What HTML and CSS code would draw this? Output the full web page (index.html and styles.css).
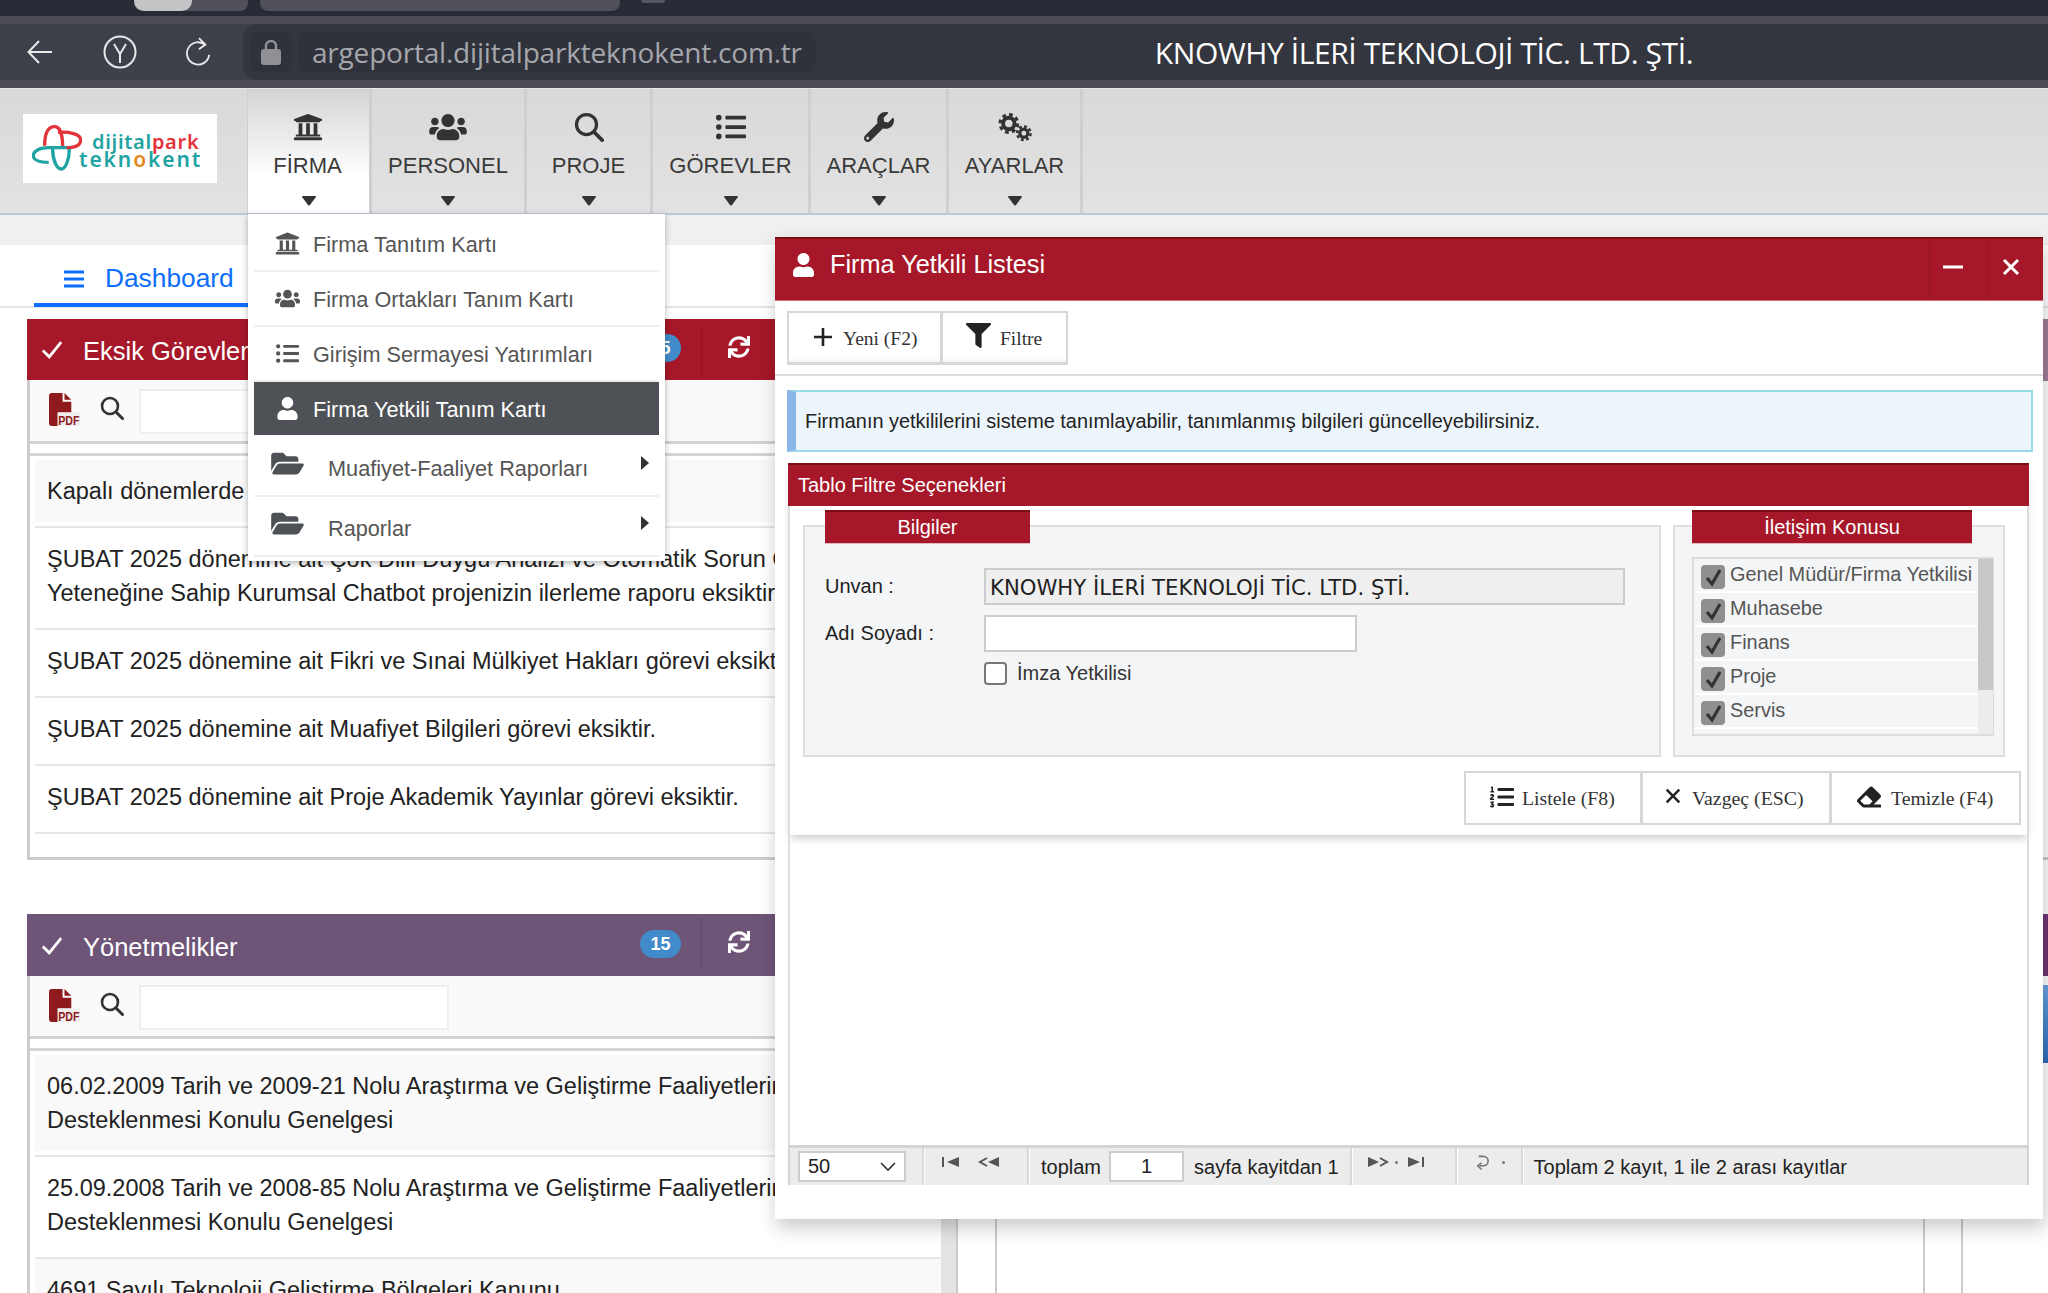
FILE: index.html
```html
<!DOCTYPE html>
<html lang="tr">
<head>
<meta charset="utf-8">
<title>Firma Yetkili Listesi</title>
<link rel="stylesheet" href="styles.css">
</head>
<body>
<svg class="sprite" xmlns="http://www.w3.org/2000/svg">
  <symbol id="i-bank" viewBox="0 0 512 512"><path d="M496 128v16a8 8 0 0 1-8 8h-24v12c0 6.627-5.373 12-12 12H60c-6.627 0-12-5.373-12-12v-12H24a8 8 0 0 1-8-8v-16a8 8 0 0 1 4.941-7.392l232-88a7.996 7.996 0 0 1 6.118 0l232 88A8 8 0 0 1 496 128zm-24 304H40c-13.255 0-24 10.745-24 24v16a8 8 0 0 0 8 8h464a8 8 0 0 0 8-8v-16c0-13.255-10.745-24-24-24zM96 192v192H60c-6.627 0-12 5.373-12 12v20h416v-20c0-6.627-5.373-12-12-12h-36V192h-64v192h-64V192h-64v192h-64V192H96z"/></symbol>
  <symbol id="i-users" viewBox="0 0 640 512"><path d="M96 224c35.3 0 64-28.7 64-64s-28.7-64-64-64-64 28.7-64 64 28.7 64 64 64zm448 0c35.3 0 64-28.7 64-64s-28.7-64-64-64-64 28.7-64 64 28.7 64 64 64zm32 32h-64c-17.6 0-33.5 7.1-45.1 18.6 40.3 22.1 68.9 62 75.1 109.4h66c17.7 0 32-14.3 32-32v-32c0-35.3-28.7-64-64-64zm-256 0c61.9 0 112-50.1 112-112S381.9 32 320 32 208 82.1 208 144s50.1 112 112 112zm76.8 32h-8.3c-20.8 10-43.9 16-68.5 16s-47.6-6-68.5-16h-8.3C179.6 288 128 339.6 128 403.2V432c0 26.5 21.5 48 48 48h288c26.5 0 48-21.5 48-48v-28.8c0-63.6-51.6-115.2-115.2-115.2zm-223.7-13.4C161.5 263.1 145.6 256 128 256H64c-35.3 0-64 28.7-64 64v32c0 17.7 14.3 32 32 32h65.9c6.3-47.4 34.9-87.3 75.2-109.4z"/></symbol>
  <symbol id="i-search" viewBox="0 0 24 24"><circle cx="10" cy="10" r="8" fill="none" stroke="currentColor" stroke-width="2.6"/><path d="M16 16l6.5 6.5" fill="none" stroke="currentColor" stroke-width="3" stroke-linecap="round"/></symbol>
  <symbol id="i-list" viewBox="0 0 512 512"><path d="M48 48a48 48 0 1 0 48 48 48 48 0 0 0-48-48zm0 160a48 48 0 1 0 48 48 48 48 0 0 0-48-48zm0 160a48 48 0 1 0 48 48 48 48 0 0 0-48-48zm448 16H176a16 16 0 0 0-16 16v32a16 16 0 0 0 16 16h320a16 16 0 0 0 16-16v-32a16 16 0 0 0-16-16zm0-320H176a16 16 0 0 0-16 16v32a16 16 0 0 0 16 16h320a16 16 0 0 0 16-16V80a16 16 0 0 0-16-16zm0 160H176a16 16 0 0 0-16 16v32a16 16 0 0 0 16 16h320a16 16 0 0 0 16-16v-32a16 16 0 0 0-16-16z"/></symbol>
  <symbol id="i-wrench" viewBox="0 0 512 512"><path d="M507.73 109.1c-2.24-9.03-13.54-12.09-20.12-5.51l-74.36 74.36-67.88-11.31-11.31-67.88 74.36-74.36c6.62-6.62 3.43-17.9-5.66-20.16-47.38-11.74-99.55.91-136.58 37.93-39.64 39.64-50.55 97.1-34.05 147.2L18.74 402.76c-24.99 24.99-24.99 65.51 0 90.5 24.99 24.99 65.51 24.99 90.5 0l213.21-213.21c50.12 16.71 107.47 5.68 147.37-34.22 37.07-37.07 49.7-89.32 37.91-136.73zM64 472c-13.25 0-24-10.75-24-24 0-13.26 10.75-24 24-24s24 10.74 24 24c0 13.25-10.75 24-24 24z"/></symbol>
  <symbol id="i-cogs" viewBox="0 0 40 34"><g fill="none" stroke="currentColor"><circle cx="13" cy="13" r="6.500" stroke-width="4.500"/><circle cx="13" cy="13" r="10" stroke-width="3.600" stroke-dasharray="4.200 3.650"/><circle cx="30" cy="24" r="4.600" stroke-width="3.600"/><circle cx="30" cy="24" r="7.600" stroke-width="3" stroke-dasharray="3.300 2.670"/></g></symbol>
  <symbol id="i-user" viewBox="0 0 448 512"><path d="M224 256c70.7 0 128-57.3 128-128S294.7 0 224 0 96 57.3 96 128s57.3 128 128 128zm89.6 32h-16.7c-22.2 10.2-46.9 16-72.9 16s-50.6-5.8-72.9-16h-16.7C60.2 288 0 348.2 0 422.4V464c0 26.5 21.5 48 48 48h352c26.5 0 48-21.5 48-48v-41.6c0-74.2-60.2-134.4-134.4-134.4z"/></symbol>
  <symbol id="i-folder" viewBox="0 0 576 512"><path d="M572.694 292.093L500.27 416.248A63.997 63.997 0 0 1 444.989 448H45.025c-18.523 0-30.064-20.093-20.731-36.093l72.424-124.155A64 64 0 0 1 152 256h399.964c18.523 0 30.064 20.093 20.73 36.093zM152 224h328v-48c0-26.51-21.49-48-48-48H272l-64-64H48C21.49 64 0 85.49 0 112v278.046l69.077-118.418C86.214 242.25 117.989 224 152 224z"/></symbol>
  <symbol id="i-sync" viewBox="0 0 512 512"><path d="M440.65 12.57l4 82.77A247.16 247.16 0 0 0 255.83 8C134.73 8 33.91 94.92 12.29 209.82A12 12 0 0 0 24.09 224h49.05a12 12 0 0 0 11.67-9.26 175.91 175.91 0 0 1 317-56.94l-101.46-4.86a12 12 0 0 0-12.57 12v47.41a12 12 0 0 0 12 12H500a12 12 0 0 0 12-12V12a12 12 0 0 0-12-12h-47.37a12 12 0 0 0-11.98 12.57zM255.83 432a175.61 175.61 0 0 1-146-77.8l101.8 4.87a12 12 0 0 0 12.57-12v-47.4a12 12 0 0 0-12-12H12a12 12 0 0 0-12 12V500a12 12 0 0 0 12 12h47.35a12 12 0 0 0 12-12.6l-4.15-82.57A247.17 247.17 0 0 0 255.83 504c121.11 0 221.93-86.92 243.55-201.82a12 12 0 0 0-11.8-14.18h-49.05a12 12 0 0 0-11.67 9.26A175.86 175.86 0 0 1 255.83 432z"/></symbol>
  <symbol id="i-filter" viewBox="0 0 512 512"><path d="M487.976 0H24.028C2.71 0-8.047 25.866 7.058 40.971L192 225.941V432c0 7.831 3.821 15.17 10.237 19.662l80 55.98C298.02 518.69 320 507.493 320 487.98V225.941l184.947-184.97C520.021 25.896 509.338 0 487.976 0z"/></symbol>
  <symbol id="i-eraser" viewBox="0 0 512 512"><path d="M497.941 273.941c18.745-18.745 18.745-49.137 0-67.882l-160-160c-18.745-18.745-49.136-18.746-67.883 0l-256 256c-18.745 18.745-18.745 49.137 0 67.882l96 96A48.004 48.004 0 0 0 144 480h356c6.627 0 12-5.373 12-12v-40c0-6.627-5.373-12-12-12H355.883l142.058-142.059zm-302.627-62.627l137.373 137.373L265.373 416H150.628l-80-80 124.686-124.686z"/></symbol>
  <symbol id="i-listol" viewBox="0 0 512 512"><path d="M61.77 401l17.5-20.15a19.92 19.92 0 0 0 5.07-14.19v-3.31C84.34 356 80.5 352 73 352H16a8 8 0 0 0-8 8v16a8 8 0 0 0 8 8h22.83a157.41 157.41 0 0 0-11 12.31l-5.61 7c-4 5.07-5.25 10.13-2.8 14.88l1.05 1.93c3 5.76 6.29 7.88 12.25 7.88h4.73c10.33 0 15.94 2.44 15.94 9.09 0 4.72-4.2 8.22-14.36 8.22a41.54 41.54 0 0 1-15.47-3.12c-6.49-3.88-11.74-3.5-15.6 3.12l-5.59 9.31c-3.72 6.13-3.19 11.72 2.63 15.94 7.71 4.69 20.38 9.44 37 9.44 34.16 0 48.5-22.75 48.5-44.12-.03-14.38-9.12-29.76-28.73-34.88zM496 224H176a16 16 0 0 0-16 16v32a16 16 0 0 0 16 16h320a16 16 0 0 0 16-16v-32a16 16 0 0 0-16-16zm0-160H176a16 16 0 0 0-16 16v32a16 16 0 0 0 16 16h320a16 16 0 0 0 16-16V80a16 16 0 0 0-16-16zm0 320H176a16 16 0 0 0-16 16v32a16 16 0 0 0 16 16h320a16 16 0 0 0 16-16v-32a16 16 0 0 0-16-16zM16 160h64a8 8 0 0 0 8-8v-16a8 8 0 0 0-8-8H64V40a8 8 0 0 0-8-8H32a8 8 0 0 0-7.14 4.42l-8 16A8 8 0 0 0 24 64h8v64H16a8 8 0 0 0-8 8v16a8 8 0 0 0 8 8zm-3.91 160H80a8 8 0 0 0 8-8v-16a8 8 0 0 0-8-8H41.32c3.29-10.29 48.34-18.68 48.34-56.44 0-29.06-25-39.56-44.47-39.56-21.36 0-33.8 10-40.46 18.75-4.37 5.59-3 10.84 2.8 15.37l8.58 6.88c5.61 4.56 11 2.47 16.12-2.44a13.44 13.44 0 0 1 9.46-3.84c3.33 0 9.28 1.56 9.28 8.75C51 248.19 0 257.31 0 304.59v4C0 316 5.08 320 12.09 320z"/></symbol>
  <symbol id="i-caret" viewBox="0 0 14 10"><path d="M1 0h12q1.500 0 .7 1.200L8 9q-1 1-2 0L.3 1.200Q-.5 0 1 0z"/></symbol>
  <symbol id="i-check" viewBox="0 0 24 20"><path d="M2 11l7 7L22 2" fill="none" stroke="currentColor" stroke-width="3"/></symbol>
  <symbol id="i-pdf" viewBox="0 0 32 34"><path d="M3 0h11v9h9v11H9v14H3a3 3 0 0 1-3-3V3a3 3 0 0 1 3-3z" fill="#8e1a1e"/><path d="M16 0l7 7h-7z" fill="#8e1a1e"/><rect x="9" y="20" width="23" height="14" fill="#f0eeec"/><text x="9.500" y="33" font-family="Liberation Sans" font-size="14" font-weight="700" fill="#8e1a1e" textLength="22" lengthAdjust="spacingAndGlyphs">PDF</text></symbol>
</svg>

<div class="page">
  <div class="tabstrip">
    <span class="tab tab-a"><span class="tab-thumb"></span></span>
    <span class="tab tab-b"></span>
    <span class="tab-dot"></span>
  </div>
  <div class="browserbar">
    <div class="browserbar-in">
      <svg class="bb-icon bb-back" viewBox="0 0 28 28"><path d="M26 14H3M13 3L2.500 14 13 25" fill="none" stroke="currentColor" stroke-width="2"/></svg>
      <svg class="bb-icon bb-y" viewBox="0 0 34 34"><ellipse cx="17" cy="17" rx="15.500" ry="15.500" fill="none" stroke="currentColor" stroke-width="2"/><path d="M11 9l6 10 6-10M17 19v9" fill="none" stroke="currentColor" stroke-width="2"/></svg>
      <svg class="bb-icon bb-reload" viewBox="0 0 28 32"><path d="M22 8.500A12 12 0 1 0 26 19M15 1l7 7-7 5" fill="none" stroke="currentColor" stroke-width="2"/></svg>
      <div class="urlzone">
        <span class="lock-pill"><svg class="bb-lock" viewBox="0 0 20 26"><path d="M5 11V7a5 5 0 0 1 10 0v4" fill="none" stroke="#8e9096" stroke-width="2.500"/><rect x="0" y="10" width="20" height="16" rx="3" fill="#8e9096"/></svg></span>
        <span class="url">argeportal.dijitalparkteknokent.com.tr</span>
        <span class="bar-title">KNOWHY İLERİ TEKNOLOJİ TİC. LTD. ŞTİ.</span>
      </div>
    </div>
  </div>

  <nav class="nav">
    <div class="logo-wrap">
      <div class="logo">
        <svg class="logo-mark" viewBox="0 0 150 138"><g fill="none" stroke-width="10"><path d="M38 62C38 18 52 5 68 5C84 5 92 30 92 66" stroke="#e2343a"/><path d="M78 22C112 20 146 26 146 45C146 60 130 68 100 68" stroke="#e2343a"/><path d="M104 68H52C22 68 4 78 4 92C4 108 26 112 50 112" stroke="#1fa3a3"/><path d="M62 72C62 105 74 132 88 132C100 132 112 105 112 72" stroke="#1fa3a3"/></g></svg>
        <div class="logo-text">
          <span class="logo-l1"><span class="c-teal">dijital</span><span class="c-red">park</span></span>
          <span class="logo-l2">tekn<span class="c-orange">o</span>kent</span>
        </div>
      </div>
    </div>
    <div class="nav-item nav-firma active"><svg class="ni"><use href="#i-bank"/></svg><span>FİRMA</span><svg class="caret"><use href="#i-caret"/></svg></div>
    <div class="nav-item nav-personel"><svg class="ni ni-w"><use href="#i-users"/></svg><span>PERSONEL</span><svg class="caret"><use href="#i-caret"/></svg></div>
    <div class="nav-item nav-proje"><svg class="ni"><use href="#i-search"/></svg><span>PROJE</span><svg class="caret"><use href="#i-caret"/></svg></div>
    <div class="nav-item nav-gorev"><svg class="ni"><use href="#i-list"/></svg><span>GÖREVLER</span><svg class="caret"><use href="#i-caret"/></svg></div>
    <div class="nav-item nav-arac"><svg class="ni"><use href="#i-wrench"/></svg><span>ARAÇLAR</span><svg class="caret"><use href="#i-caret"/></svg></div>
    <div class="nav-item nav-ayar"><svg class="ni ni-c"><use href="#i-cogs"/></svg><span>AYARLAR</span><svg class="caret"><use href="#i-caret"/></svg></div>
  </nav>
  <div class="subnoise"></div>

  <div class="content">
    <div class="dash-tabs">
      <div class="dash-tab">
        <svg class="dash-ham" viewBox="0 0 20 18"><path d="M0 2h20M0 9h20M0 16h20" stroke="currentColor" stroke-width="3"/></svg>
        <span>Dashboard</span>
      </div>
    </div>
    <div class="columns">
      <div class="col col-left">
        <section class="panel panel-red">
          <header class="panel-head">
            <svg class="ph-check"><use href="#i-check"/></svg>
            <span class="ph-title">Eksik Görevler</span>
            <span class="badge">15</span>
            <span class="ph-btn"><svg class="ph-sync"><use href="#i-sync"/></svg></span>
          </header>
          <div class="panel-tools">
            <svg class="pdf"><use href="#i-pdf"/></svg>
            <svg class="tool-search"><use href="#i-search"/></svg>
            <span class="tool-input"></span>
          </div>
          <div class="rows">
            <div class="row row-alt">Kapalı dönemlerde</div>
            <div class="row">ŞUBAT 2025 dönemine ait Çok Dilli Duygu Analizi ve Otomatik Sorun Çözme Yeteneğine Sahip Kurumsal Chatbot projenizin ilerleme raporu eksiktir.</div>
            <div class="row">ŞUBAT 2025 dönemine ait Fikri ve Sınai Mülkiyet Hakları görevi eksiktir.</div>
            <div class="row">ŞUBAT 2025 dönemine ait Muafiyet Bilgileri görevi eksiktir.</div>
            <div class="row">ŞUBAT 2025 dönemine ait Proje Akademik Yayınlar görevi eksiktir.</div>
          </div>
        </section>
        <section class="panel panel-purple">
          <header class="panel-head">
            <svg class="ph-check"><use href="#i-check"/></svg>
            <span class="ph-title">Yönetmelikler</span>
            <span class="badge">15</span>
            <span class="ph-btn"><svg class="ph-sync"><use href="#i-sync"/></svg></span>
          </header>
          <div class="panel-tools">
            <svg class="pdf"><use href="#i-pdf"/></svg>
            <svg class="tool-search"><use href="#i-search"/></svg>
            <span class="tool-input"></span>
          </div>
          <div class="rows">
            <div class="row row-alt">06.02.2009 Tarih ve 2009-21 Nolu Araştırma ve Geliştirme Faaliyetlerinin Desteklenmesi Konulu Genelgesi</div>
            <div class="row">25.09.2008 Tarih ve 2008-85 Nolu Araştırma ve Geliştirme Faaliyetlerinin Desteklenmesi Konulu Genelgesi</div>
            <div class="row row-alt">4691 Sayılı Teknoloji Geliştirme Bölgeleri Kanunu</div>
          </div>
        </section>
      </div>
      <div class="gutter"></div>
      <div class="col col-mid"></div>
      <div class="col col-right">
        <div class="sliver sliver-a"></div>
        <div class="sliver sliver-line"></div>
        <div class="sliver sliver-b"></div>
        <div class="sliver sliver-c"></div>
      </div>
    </div>
  </div>

  <div class="menu">
    <a class="mi"><svg class="mi-ic"><use href="#i-bank"/></svg>Firma Tanıtım Kartı</a>
    <a class="mi"><svg class="mi-ic"><use href="#i-users"/></svg>Firma Ortakları Tanım Kartı</a>
    <a class="mi"><svg class="mi-ic mi-ic-s"><use href="#i-list"/></svg>Girişim Sermayesi Yatırımları</a>
    <a class="mi mi-active"><svg class="mi-ic mi-ic-s"><use href="#i-user"/></svg>Firma Yetkili Tanım Kartı</a>
    <a class="mi mi-sub"><svg class="mi-fold"><use href="#i-folder"/></svg>Muafiyet-Faaliyet Raporları<i class="mi-arrow"></i></a>
    <a class="mi mi-sub"><svg class="mi-fold"><use href="#i-folder"/></svg>Raporlar<i class="mi-arrow"></i></a>
  </div>

  <div class="dialog">
    <header class="dlg-head">
      <svg class="dlg-user"><use href="#i-user"/></svg>
      <span class="dlg-title">Firma Yetkili Listesi</span>
      <span class="dlg-btn"><svg viewBox="0 0 20 20" class="dlg-btn-ic"><path d="M0 10h20" stroke="#fff" stroke-width="3"/></svg></span>
      <span class="dlg-btn dlg-btn-last"><svg viewBox="0 0 20 20" class="dlg-btn-ic"><path d="M3 3l14 14M17 3L3 17" stroke="#fff" stroke-width="3"/></svg></span>
    </header>
    <div class="dlg-tools">
      <div class="btn-group">
        <button class="sbtn sbtn-yeni"><svg class="sb-ic" viewBox="0 0 20 20"><path d="M10 1v18M1 10h18" stroke="#222" stroke-width="2.600"/></svg>Yeni (F2)</button>
        <button class="sbtn sbtn-filtre"><svg class="sb-ic sb-filter"><use href="#i-filter"/></svg>Filtre</button>
      </div>
    </div>
    <div class="info">Firmanın yetkililerini sisteme tanımlayabilir, tanımlanmış bilgileri güncelleyebilirsiniz.</div>
    <div class="filter">
      <div class="filter-head">Tablo Filtre Seçenekleri</div>
      <div class="filter-body">
        <div class="fs fs-info">
          <div class="legend legend-info">Bilgiler</div>
          <div class="form-row form-row-1"><label class="lab">Unvan :</label><span class="inp inp-ro">KNOWHY İLERİ TEKNOLOJİ TİC. LTD. ŞTİ.</span></div>
          <div class="form-row form-row-2"><label class="lab">Adı Soyadı :</label><span class="inp inp-name"></span></div>
          <div class="form-row form-row-3"><span class="lab"></span><span class="cb"></span><span class="cb-label">İmza Yetkilisi</span></div>
        </div>
        <div class="fs fs-contact">
          <div class="legend legend-contact">İletişim Konusu</div>
          <div class="clist">
            <div class="clist-items">
              <div class="citem"><span class="cc"><svg viewBox="0 0 24 24"><path d="M6 13l5 6 8-14" fill="none" stroke="#333" stroke-width="3.200"/></svg></span>Genel Müdür/Firma Yetkilisi</div>
              <div class="citem"><span class="cc"><svg viewBox="0 0 24 24"><path d="M6 13l5 6 8-14" fill="none" stroke="#333" stroke-width="3.200"/></svg></span>Muhasebe</div>
              <div class="citem"><span class="cc"><svg viewBox="0 0 24 24"><path d="M6 13l5 6 8-14" fill="none" stroke="#333" stroke-width="3.200"/></svg></span>Finans</div>
              <div class="citem"><span class="cc"><svg viewBox="0 0 24 24"><path d="M6 13l5 6 8-14" fill="none" stroke="#333" stroke-width="3.200"/></svg></span>Proje</div>
              <div class="citem"><span class="cc"><svg viewBox="0 0 24 24"><path d="M6 13l5 6 8-14" fill="none" stroke="#333" stroke-width="3.200"/></svg></span>Servis</div>
            </div>
            <div class="cscroll"><span class="cthumb"></span></div>
          </div>
        </div>
      </div>
      <div class="filter-actions">
        <button class="abtn abtn-list"><svg class="ab-ic"><use href="#i-listol"/></svg>Listele (F8)</button>
        <button class="abtn abtn-esc"><svg class="ab-ic ab-x" viewBox="0 0 20 20"><path d="M3 3l14 14M17 3L3 17" stroke="#222" stroke-width="2.800"/></svg>Vazgeç (ESC)</button>
        <button class="abtn abtn-clear"><svg class="ab-ic"><use href="#i-eraser"/></svg>Temizle (F4)</button>
      </div>
    </div>
    <div class="grid-area"></div>
    <div class="pager">
      <span class="pg-select"><span>50</span><svg viewBox="0 0 16 10" class="pg-chev"><path d="M1 1l7 7 7-7" fill="none" stroke="#333" stroke-width="1.600"/></svg></span>
      <span class="pg-sep"></span>
      <span class="pg-nav pg-nav-a">
        <svg class="pg-ic" viewBox="0 0 18 12"><path d="M1 1v10" stroke="#555" stroke-width="2"/><path d="M17 1v10L5 6z" fill="#555"/></svg>
        <svg class="pg-ic pg-ic-w" viewBox="0 0 22 12"><path d="M9 2L2 6l7 4" fill="none" stroke="#555" stroke-width="2"/><path d="M21 1v10L10 6z" fill="#555"/></svg>
      </span>
      <span class="pg-sep pg-sep-0"></span>
      <span class="pg-text pg-toplam">toplam</span>
      <span class="pg-input">1</span>
      <span class="pg-text pg-sayfa">sayfa kayitdan 1</span>
      <span class="pg-sep pg-sep-b"></span>
      <span class="pg-nav pg-nav-b">
        <svg class="pg-ic pg-ic-w" viewBox="0 0 22 12"><path d="M1 1v10l11-5z" fill="#555"/><path d="M13 2l7 4-7 4" fill="none" stroke="#555" stroke-width="2"/></svg>
        <span class="pg-dot"></span>
        <svg class="pg-ic" viewBox="0 0 18 12"><path d="M1 1v10l12-5z" fill="#555"/><path d="M16 1v10" stroke="#555" stroke-width="2"/></svg>
      </span>
      <span class="pg-sep pg-sep-0"></span>
      <span class="pg-nav pg-nav-c">
        <svg class="pg-ic-r" viewBox="0 0 16 18"><path d="M4 3h5a5 5 0 0 1 0 10H5" fill="none" stroke="#777" stroke-width="1.800"/><path d="M7 10l-4 3 4 4" fill="none" stroke="#777" stroke-width="1.800"/></svg>
        <span class="pg-dot"></span>
      </span>
      <span class="pg-sep pg-sep-0"></span>
      <span class="pg-text pg-total">Toplam 2 kayıt, 1 ile 2 arası kayıtlar</span>
    </div>
  </div>
</div>
</body>
</html>
```
FILE: styles.css
```css
* { box-sizing: border-box; }
html, body { margin: 0; padding: 0; }
body { width: 2048px; height: 1293px; overflow: hidden; background: #fff; font-family: "Liberation Sans", Arial, sans-serif; color: #222; }
.sprite { position: absolute; width: 0; height: 0; overflow: hidden; }
.page { position: relative; width: 2048px; height: 1293px; overflow: hidden; }
svg { display: block; fill: currentColor; }

/* browser chrome */
.tabstrip { height: 16px; background: #282a35; display: flex; align-items: flex-start; padding-left: 134px; }
.tab { height: 11px; background: #4f5059; border-radius: 0 0 8px 8px; display: block; }
.tab-a { width: 114px; }
.tab-thumb { display: block; width: 58px; height: 11px; background: #c4c4c6; border-radius: 0 0 10px 10px; }
.tab-b { width: 360px; margin-left: 12px; }
.tab-dot { width: 24px; height: 3px; background: #55565f; border-radius: 0 0 12px 12px; margin-left: 21px; }
.browserbar { height: 73px; background: #4a4b55; padding: 8px 0; border-bottom: 1px solid #e8e8e8; }
.browserbar-in { height: 56px; background: #3d3f49; display: flex; align-items: center; color: #e9e9ea; }
.bb-icon { flex: none; }
.bb-back { width: 28px; height: 28px; margin-left: 26px; }
.bb-y { width: 34px; height: 34px; margin-left: 49px; }
.bb-reload { width: 26px; height: 32px; margin-left: 48px; }
.urlzone { flex: 1; height: 56px; margin-left: 32px; background: #33353f; border-radius: 14px 0 0 14px; display: flex; align-items: center; }
.lock-pill { width: 42px; height: 42px; margin-left: 7px; background: #2f313b; border-radius: 10px; display: flex; align-items: center; justify-content: center; flex: none; }
.bb-lock { width: 20px; height: 26px; }
.url { font-family: "Open Sans", sans-serif; font-size: 28px; line-height: 42px; color: #a5a7ac; margin-left: 6px; padding: 0 14px; background: #2f313b; border-radius: 10px; white-space: nowrap; letter-spacing: -0.200px; flex: none; }
.bar-title { font-family: "Open Sans", sans-serif; font-size: 30px; color: #fff; margin-left: 339px; white-space: nowrap; letter-spacing: -0.400px; flex: none; }

/* main nav */
.nav { height: 126px; display: flex; background: linear-gradient(#d9d9d9, #e2e2e2); border-bottom: 2px solid #bcc8da; }
.logo-wrap { width: 247px; flex: none; padding: 25px 0 0 23px; }
.logo { width: 194px; height: 69px; background: #fff; position: relative; }
.logo-mark { position: absolute; left: 9px; top: 11px; width: 50px; height: 46px; }
.logo-text { position: absolute; left: 56px; top: 19px; display: flex; flex-direction: column; font-family: "Noto Sans", sans-serif; font-weight: 600; color: #1fa3a3; }
.logo-l1 { font-size: 20px; line-height: 18px; margin-left: 13px; letter-spacing: 0.700px; white-space: nowrap; }
.logo-l2 { font-size: 21px; line-height: 17px; letter-spacing: 1.900px; white-space: nowrap; }
.c-red { color: #e2343a; }
.c-teal { color: #1fa3a3; }
.c-orange { color: #e08a1e; }
.nav-item { flex: none; border-right: 3px solid #cfcfcf; display: flex; flex-direction: column; align-items: center; font-size: 22px; color: #3a3a3a; padding-top: 23px; }
.nav-item span { display: block; margin-top: 9px; line-height: 30px; white-space: nowrap; }
.nav-firma { width: 125px; padding-right: 2px; background: linear-gradient(#d4d4d4, #fff 70%); border-left: 1px solid #cfcfcf; }
.nav-firma .caret { margin-left: 3px; }
.nav-personel { width: 155px; }
.nav-proje { width: 126px; }
.nav-gorev { width: 158px; }
.nav-arac { width: 138px; }
.nav-ayar { width: 134px; }
.ni { width: 30px; height: 30px; color: #333; }
.ni-w { width: 38px; }
.ni-c { width: 40px; }
.caret { width: 16px; height: 10px; margin-top: 15px; color: #333; }
.subnoise { height: 30px; background: #f0f0f0; }

/* content */
.content { height: 1048px; }
.dash-tabs { height: 63px; border-bottom: 2px solid #e6e6e6; padding-left: 34px; background: #fff; }
.dash-tab { width: 214px; height: 62px; padding: 19px 0 0 30px; border-bottom: 4px solid #0d6efd; display: flex; color: #0d6efd; font-size: 26.300px; gap: 21px; line-height: 28px; }
.dash-ham { width: 20px; height: 18px; margin-top: 6px; flex: none; }
.columns { display: flex; padding: 11px 0 0 27px; align-items: flex-start; }
.col-left { width: 914px; flex: none; }
.gutter { width: 17px; height: 1000px; background: #e4e4e4; border-right: 2px solid #ccc; flex: none; }
.col-mid { width: 930px; height: 1000px; flex: none; margin-left: 37px; border: solid #ccc; border-width: 0 2px; }
.col-right { width: 90px; height: 1000px; margin-left: 36px; flex: none; border-left: 2px solid #ccc; }
.sliver { height: 62px; }
.sliver-a { background: #a07c9a; }
.sliver-line { height: 3px; margin-top: 476px; background: #ccc; }
.sliver-b { background: #6f3574; margin-top: 54px; }
.sliver-c { height: 78px; margin-top: 9px; background: linear-gradient(#6aa3e2, #2c6cbc); }
.panel { border: solid #ccc; border-width: 0 0 3px 3px; }
.panel-purple { margin-top: 54px; border-bottom: 0; }
.panel-head { height: 61px; margin-left: -3px; display: flex; align-items: center; padding-left: 14px; color: #fff; }
.panel-red .panel-head { background: #a61829; }
.panel-purple .panel-head { height: 62px; background: #6e5577; }
.ph-check { width: 22px; height: 19px; flex: none; }
.ph-title { font-size: 25.500px; margin: 4px 0 0 20px; width: 557px; flex: none; white-space: nowrap; }
.badge { width: 41px; height: 28px; border-radius: 14px; background: #428bca; font-weight: 700; font-size: 18px; line-height: 28px; text-align: center; margin-top: -3px; flex: none; }
.ph-btn { margin-left: 20px; width: 75px; height: 52px; border-left: 1px solid rgba(0,0,0,.12); display: flex; justify-content: center; padding-top: 12px; flex: none; }
.ph-sync { width: 22px; height: 22px; }
.panel-tools { height: 64px; background: #fafafa; display: flex; align-items: flex-start; padding-left: 19px; border-bottom: 3px solid #d2d2d2; }
.panel-purple .panel-tools { height: 63px; }
.pdf { width: 31px; height: 33px; flex: none; margin-top: 13px; }
.tool-search { width: 24px; height: 24px; margin: 16px 0 0 20px; color: #333; flex: none; }
.tool-input { width: 310px; height: 45px; margin: 9px 0 0 15px; background: #fff; border: 2px solid #eee; flex: none; }
.rows { border-top: 3px solid #d6d6d6; margin-top: 9px; padding: 4px 0 0 5px; }
.row { font-size: 23.500px; line-height: 34px; padding: 14px 14px 18px 12px; border-bottom: 2px solid #e6e6e6; color: #222; }
.row-alt { background: linear-gradient(#f9f9f9, #f9f9f9) no-repeat; background-size: 100% calc(100% - 4px); }
.panel-red .rows { height: 404px; }

/* firm menu */
.menu { position: absolute; left: 248px; top: 214px; width: 417px; height: 347px; background: #fff; box-shadow: 0 2px 6px rgba(0,0,0,.3); padding: 3px 6px 0; }
.mi { display: flex; align-items: center; height: 55px; font-size: 21.700px; color: #555; border-bottom: 2px solid #f3edf0; position: relative; padding: 3px 0 0 21px; gap: 13px; white-space: nowrap; }
.mi-ic { width: 25px; height: 25px; flex: none; margin-top: -4px; color: #555; }
.mi-ic-s { width: 25px; height: 23px; }
.mi-active { height: 53px; background: #4e5156; color: #fff; border-bottom: 0; margin-bottom: 2px; }
.mi-active .mi-ic { color: #fff; }
.mi-sub { height: 60px; padding: 5px 0 0 17px; gap: 24px; }
.mi-fold { width: 33px; height: 29px; flex: none; color: #4e5156; margin-top: -10px; }
.mi-arrow { position: absolute; right: 10px; top: 19px; border-left: 8px solid #333; border-top: 7px solid transparent; border-bottom: 7px solid transparent; }

/* dialog */
.dialog { position: absolute; left: 775px; top: 237px; width: 1268px; height: 982px; background: #fff; box-shadow: 2px 8px 18px rgba(0,0,0,.22); display: flex; flex-direction: column; }
.dlg-head { height: 64px; flex: none; background: #a61829; border-top: 2px solid #7c0f14; border-bottom: 1px solid #cf6a76; display: flex; align-items: center; color: #fff; padding-left: 18px; }
.dlg-user { width: 21px; height: 24px; flex: none; margin-top: -9px; }
.dlg-title { font-size: 25.300px; margin: -10px 0 0 16px; flex: 1; }
.dlg-btn { width: 58px; height: 58px; border-left: 1px solid rgba(0,0,0,.12); display: flex; align-items: center; padding-left: 13px; flex: none; }
.dlg-btn-last { width: 56px; }
.dlg-btn-ic { width: 20px; height: 20px; margin-top: -6px; }
.dlg-tools { height: 75px; flex: none; border-bottom: 2px solid #ddd; padding: 10px 0 0 12px; }
.btn-group { display: flex; }
.sbtn { height: 54px; background: #fff; border: 2px solid #d7d7d7; border-bottom-width: 3px; margin: 0; font-family: "Liberation Serif", serif; font-size: 19.500px; color: #333; display: flex; align-items: center; padding: 2px 0 0; box-shadow: inset 0 -5px 5px -4px #eee; }
.sbtn-yeni { width: 155px; padding-left: 24px; gap: 10px; }
.sbtn-filtre { width: 127px; padding-left: 23px; gap: 9px; margin-left: -1px; }
.sb-ic { width: 20px; height: 20px; flex: none; margin-top: -4px; }
.sb-filter { width: 25px; height: 25px; color: #222; margin-top: -6px; }
.info { height: 62px; flex: none; margin: 14px 10px 0 12px; background: #edf5fc; border: 2px solid #9adbea; border-left: 9px solid #8ab6e8; padding-left: 9px; line-height: 58px; font-size: 19.900px; color: #222; white-space: nowrap; }
.filter { height: 372px; flex: none; margin: 11px 14px 0 13px; border: solid #ddd; border-width: 0 2px; box-shadow: 0 6px 8px -3px rgba(0,0,0,.22); display: flex; flex-direction: column; background: #fff; }
.filter-head { height: 43px; flex: none; margin: 0 -2px; background: #a61829; border-top: 2px solid #7c0f14; color: #fff; font-size: 20px; line-height: 41px; padding-left: 10px; }
.filter-body { display: flex; padding: 19px 0 0 13px; gap: 12px; position: relative; height: 251px; flex: none; }
.fs { border: 2px solid #dedede; background: #f4f5f7; height: 232px; position: relative; flex: none; }
.fs-info { width: 858px; padding-top: 41px; }
.fs-contact { width: 332px; padding: 30px 0 0 17px; }
.legend { position: absolute; top: -17px; height: 34px; background: #a61829; border-top: 2px solid #7c0f14; border-bottom: 1px solid #e5b9be; color: #fff; font-size: 20px; line-height: 30px; text-align: center; }
.legend-info { left: 20px; width: 205px; }
.legend-contact { left: 17px; width: 280px; }
.form-row { display: flex; align-items: center; }
.form-row-2 { margin-top: 10px; }
.form-row-3 { margin-top: 10px; }
.lab { width: 179px; padding-left: 20px; font-size: 20px; color: #222; flex: none; }
.inp { display: block; height: 37px; border: 2px solid #ccc; background: #fff; flex: none; }
.inp-ro { width: 641px; background: #efefef; font-family: "DejaVu Sans", sans-serif; font-size: 21.200px; line-height: 35px; padding-left: 4px; color: #222; white-space: nowrap; }
.inp-name { width: 373px; }
.cb { width: 23px; height: 23px; border: 2px solid #777; border-radius: 4px; background: #fff; flex: none; }
.cb-label { margin-left: 10px; font-size: 20px; color: #333; }
.clist { width: 302px; height: 179px; border: 2px solid #dcdcdc; display: flex; }
.clist-items { width: 284px; flex: none; }
.citem { height: 34px; border-bottom: 2px solid #fff; display: flex; align-items: flex-start; font-size: 19.900px; color: #555; padding: 1px 0 0 7px; white-space: nowrap; line-height: 28px; }
.cc { width: 24px; height: 24px; margin-top: 5px; margin-right: 5px; background: #8f8f8f; border-radius: 4px; flex: none; }
.cc svg { width: 24px; height: 24px; }
.cscroll { width: 15px; background: #ececec; flex: none; }
.cthumb { display: block; height: 131px; background: #c8c8c8; }
.filter-actions { display: flex; justify-content: flex-end; padding: 14px 6px 0 0; }
.abtn { height: 54px; background: #fff; border: 2px solid #d7d7d7; margin: 0 0 0 -1px; font-family: "Liberation Serif", serif; font-size: 19.800px; color: #333; display: flex; align-items: center; padding: 0; }
.abtn-list { width: 178px; padding-left: 24px; gap: 8px; }
.abtn-esc { width: 190px; padding-left: 21px; gap: 10px; }
.abtn-clear { width: 191px; padding-left: 25px; gap: 10px; }
.ab-ic { width: 24px; height: 24px; flex: none; margin-top: -2px; color: #222; }
.ab-x { width: 18px; height: 18px; margin-top: -4px; }
.grid-area { height: 310px; flex: none; margin: 0 14px 0 13px; border: solid #ddd; border-width: 0 2px; }
.pager { height: 40px; flex: none; margin: 0 14px 0 13px; background: #ececec; border: solid #d4d4d4; border-width: 3px 2px 0; display: flex; align-items: center; font-size: 20px; color: #222; padding-left: 8px; }
.pg-select { width: 108px; height: 31px; background: #fff; border: 2px solid #ccc; display: flex; align-items: center; justify-content: space-between; padding: 0 8px; flex: none; }
.pg-chev { width: 16px; height: 10px; }
.pg-sep { width: 3px; height: 37px; background: #d8d8d8; border-right: 1px solid #fff; flex: none; margin-left: 16px; }
.pg-sep-0 { margin-left: 0; }
.pg-nav { display: flex; align-items: center; flex: none; margin-top: -9px; }
.pg-nav-a { width: 102px; padding-left: 17px; gap: 18px; }
.pg-ic { width: 18px; height: 12px; }
.pg-ic-w { width: 22px; height: 12px; }
.pg-text { white-space: nowrap; flex: none; margin-top: 2px; }
.pg-toplam { margin-left: 11px; }
.pg-input { width: 75px; height: 31px; background: #fff; border: 2px solid #ccc; text-align: center; line-height: 27px; margin: 0 10px 0 8px; flex: none; }
.pg-sep-b { margin-left: 11px; }
.pg-nav-b { width: 102px; padding-left: 14px; gap: 6px; }
.pg-dot { width: 3px; height: 3px; background: #777; border-radius: 50%; flex: none; }
.pg-nav-b .pg-dot { margin-right: 3px; }
.pg-nav-c { width: 63px; padding-left: 17px; gap: 12px; }
.pg-ic-r { width: 15px; height: 18px; }
.pg-total { margin-left: 10px; }
```
